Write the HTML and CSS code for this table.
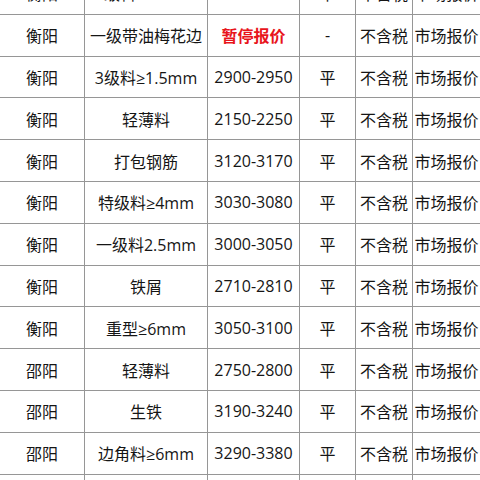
FILE: index.html
```html
<!DOCTYPE html>
<html lang="zh">
<head>
<meta charset="utf-8">
<link rel="stylesheet" href="styles.css">
</head>
<body>
<div class="sheet">
  <div class="c">衡阳</div><div class="c">3级料≥1.5mm</div><div class="c">2900-2950</div><div class="c">平</div><div class="c">不含税</div><div class="c">市场报价</div>
  <div class="c">衡阳</div><div class="c">一级带油梅花边</div><div class="c red">暂停报价</div><div class="c">-</div><div class="c">不含税</div><div class="c">市场报价</div>
  <div class="c">衡阳</div><div class="c">3级料≥1.5mm</div><div class="c">2900-2950</div><div class="c">平</div><div class="c">不含税</div><div class="c">市场报价</div>
  <div class="c">衡阳</div><div class="c">轻薄料</div><div class="c">2150-2250</div><div class="c">平</div><div class="c">不含税</div><div class="c">市场报价</div>
  <div class="c">衡阳</div><div class="c">打包钢筋</div><div class="c">3120-3170</div><div class="c">平</div><div class="c">不含税</div><div class="c">市场报价</div>
  <div class="c">衡阳</div><div class="c">特级料≥4mm</div><div class="c">3030-3080</div><div class="c">平</div><div class="c">不含税</div><div class="c">市场报价</div>
  <div class="c">衡阳</div><div class="c">一级料2.5mm</div><div class="c">3000-3050</div><div class="c">平</div><div class="c">不含税</div><div class="c">市场报价</div>
  <div class="c">衡阳</div><div class="c">铁屑</div><div class="c">2710-2810</div><div class="c">平</div><div class="c">不含税</div><div class="c">市场报价</div>
  <div class="c">衡阳</div><div class="c">重型≥6mm</div><div class="c">3050-3100</div><div class="c">平</div><div class="c">不含税</div><div class="c">市场报价</div>
  <div class="c">邵阳</div><div class="c">轻薄料</div><div class="c">2750-2800</div><div class="c">平</div><div class="c">不含税</div><div class="c">市场报价</div>
  <div class="c">邵阳</div><div class="c">生铁</div><div class="c">3190-3240</div><div class="c">平</div><div class="c">不含税</div><div class="c">市场报价</div>
  <div class="c">邵阳</div><div class="c">边角料≥6mm</div><div class="c">3290-3380</div><div class="c">平</div><div class="c">不含税</div><div class="c">市场报价</div>
  <div class="c">邵阳</div><div class="c">重型≥6mm</div><div class="c">3300-3350</div><div class="c">平</div><div class="c">不含税</div><div class="c">市场报价</div>
</div>
</body>
</html>
```
FILE: styles.css
```css
html, body {
  margin: 0;
  padding: 0;
  background: #fff;
  overflow: hidden;
}
.sheet {
  margin-top: -27px;
  display: grid;
  grid-template-columns: 84px 122px 91px 55px 56px 67px;
  grid-auto-rows: 40.8px;
  gap: 1px;
  background: #969696;
  width: 480px;
  font-family: "Open Sans", "Noto Sans CJK SC", sans-serif;
  font-size: 16px;
  color: #151515;
}
.c {
  background: #fff;
  display: flex;
  align-items: center;
  justify-content: center;
  white-space: nowrap;
}
.red {
  color: #e8141b;
  font-weight: bold;
}
```
